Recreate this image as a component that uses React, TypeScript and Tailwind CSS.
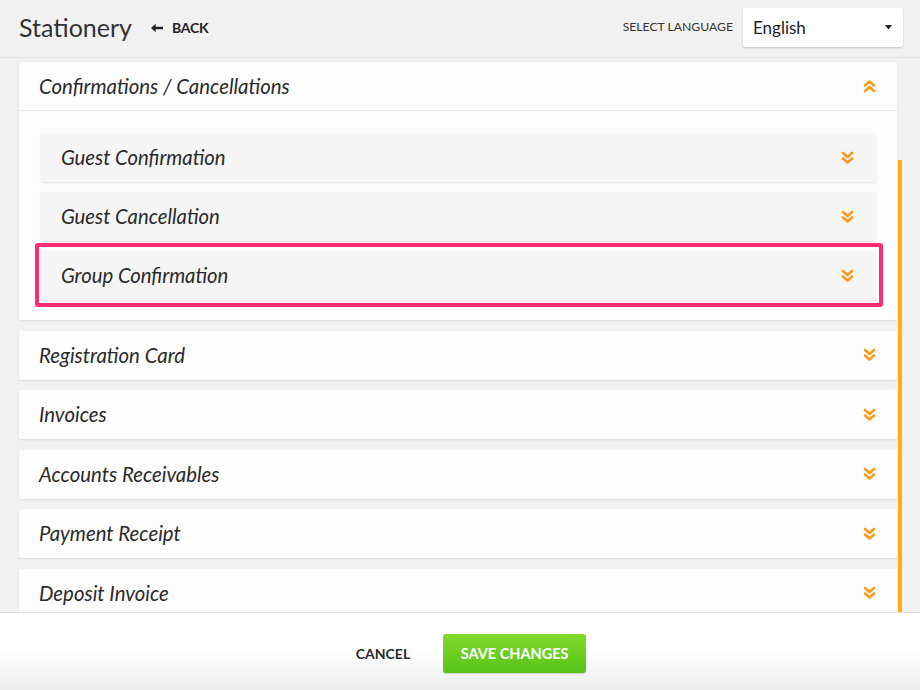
import { useState } from 'react'

type Section = {
  title: string
  children?: string[]
}

const sections: Section[] = [
  {
    title: 'Confirmations / Cancellations',
    children: ['Guest Confirmation', 'Guest Cancellation', 'Group Confirmation'],
  },
  { title: 'Registration Card' },
  { title: 'Invoices' },
  { title: 'Accounts Receivables' },
  { title: 'Payment Receipt' },
  { title: 'Deposit Invoice' },
]

/** Dupla seta laranja do acordeão */
function DoubleChevron({ up = false }: { up?: boolean }) {
  return (
    <svg
      width="13"
      height="14"
      viewBox="0 0 13 14"
      className={up ? 'rotate-180' : ''}
      aria-hidden
    >
      <polyline
        points="2,2 6.5,6 11,2"
        fill="none"
        stroke="#fb9a1c"
        strokeWidth="2.6"
        strokeLinecap="round"
        strokeLinejoin="round"
      />
      <polyline
        points="2,7.5 6.5,11.5 11,7.5"
        fill="none"
        stroke="#fb9a1c"
        strokeWidth="2.6"
        strokeLinecap="round"
        strokeLinejoin="round"
      />
    </svg>
  )
}

function SubPanel({ label, highlighted }: { label: string; highlighted?: boolean }) {
  return (
    <div className="relative">
      <div className="flex h-[49px] items-center justify-between rounded-[2px] bg-[#f5f5f5] pl-5 pr-[22px] shadow-[0_1px_2px_rgba(0,0,0,0.12)]">
        <span className="text-[20.3px] italic text-[#2a2a2a]">{label}</span>
        <DoubleChevron />
      </div>
      {highlighted && (
        <div className="pointer-events-none absolute -bottom-[7px] -left-[6px] -right-[7px] -top-[8px] rounded-[3px] border-4 border-[#ff2d6f]" />
      )}
    </div>
  )
}

function Card({ section, open }: { section: Section; open: boolean }) {
  return (
    <div className="rounded-[2px] bg-[#fdfdfd] shadow-[0_1px_2px_rgba(0,0,0,0.1)]">
      <div
        className={`flex h-[49px] items-center justify-between pl-5 pr-[21px] ${
          open ? 'border-b border-[#e6e6e6]' : ''
        }`}
      >
        <span className="text-[20.4px] italic text-[#2a2a2a]">{section.title}</span>
        <DoubleChevron up={open} />
      </div>
      {open && section.children && (
        <div className="flex flex-col gap-[10px] pb-5 pl-[22px] pr-[21px] pt-[22px]">
          {section.children.map((c) => (
            <SubPanel key={c} label={c} highlighted={c === 'Group Confirmation'} />
          ))}
        </div>
      )}
    </div>
  )
}

export default function App() {
  const [language] = useState('English')

  return (
    <div
      className="flex h-[690px] w-[920px] flex-col overflow-hidden bg-[#f1f1f1] text-[#333]"
      style={{ fontFamily: 'Lato, "Open Sans", sans-serif' }}
    >
      {/* Cabeçalho */}
      <header className="flex h-[58px] shrink-0 items-center justify-between border-b border-[#e2e2e2] pb-[2px] pl-[19px] pr-[17px]">
        <div className="flex items-center">
          <h1 className="text-[25px] font-normal leading-none text-[#333]">Stationery</h1>
          <button className="ml-[19px] flex items-center gap-[9px] text-[14px] font-bold tracking-[-0.2px] text-[#222]">
            <svg width="12" height="10" viewBox="0 0 13 10" aria-hidden>
              <path d="M0 5 L5 0.5 L5 3.6 L13 3.6 L13 6.4 L5 6.4 L5 9.5 Z" fill="#222" />
            </svg>
            BACK
          </button>
        </div>
        <div className="flex items-center gap-[10px]">
          <span className="text-[12.2px] text-[#333]">SELECT LANGUAGE</span>
          <div className="flex h-[39px] w-[160px] items-center justify-between rounded-[2px] bg-white pl-[10px] pr-[11px] shadow-[0_1px_2px_rgba(0,0,0,0.2)]">
            <span className="text-[17px] text-[#222]">{language}</span>
            <svg width="7" height="5" viewBox="0 0 7 5" aria-hidden>
              <path d="M0 0 L7 0 L3.5 4.5 Z" fill="#222" />
            </svg>
          </div>
        </div>
      </header>

      <main className="relative flex-1 overflow-hidden">
        <div className="flex flex-col gap-[10.5px] pl-[19px] pr-[23px] pt-[4px]">
          {sections.map((s, i) => (
            <Card key={s.title} section={s} open={i === 0} />
          ))}
        </div>
        <div className="absolute bottom-0 right-[18px] top-[102px] w-[4px] bg-[#ffad1a]" />
      </main>

      {/* Rodapé */}
      <footer className="flex h-[78px] shrink-0 items-center justify-center gap-[33px] border-t border-[#dcdcdc] bg-gradient-to-b from-white via-white to-[#ececec] pl-[22px] pt-[4px]">
        <button className="text-[14px] font-bold text-[#2a2a2a]">CANCEL</button>
        <button className="h-[39px] w-[143px] rounded-[3px] bg-gradient-to-b from-[#84da2c] to-[#56c218] text-[14.5px] font-bold text-white shadow-[0_1px_1px_rgba(0,0,0,0.15)]">
          SAVE CHANGES
        </button>
      </footer>
    </div>
  )
}
